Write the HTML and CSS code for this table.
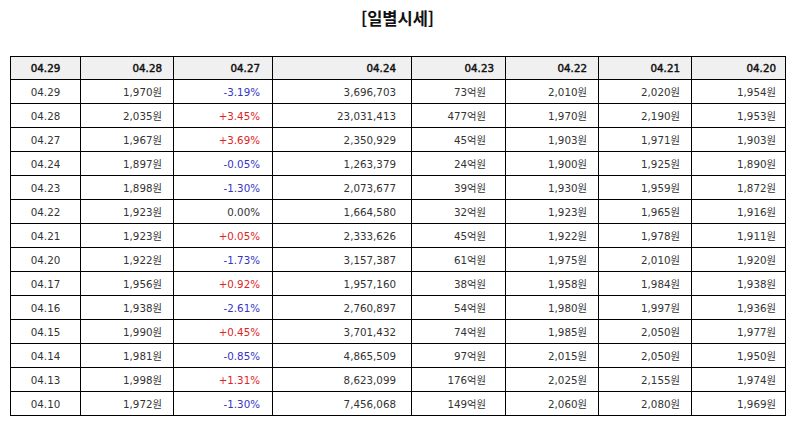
FILE: index.html
```html
<!DOCTYPE html>
<html lang="ko">
<head>
<meta charset="utf-8">
<link rel="stylesheet" href="styles.css">
</head>
<body>
<h2 class="title">[일별시세]</h2>
<table class="quotes">
<colgroup>
<col class="c1"><col class="c2"><col class="c3"><col class="c4"><col class="c5"><col class="c6"><col class="c7"><col class="c8">
</colgroup>
<thead>
<tr><th class="date">04.29</th><th>04.28</th><th>04.27</th><th>04.24</th><th>04.23</th><th>04.22</th><th>04.21</th><th>04.20</th></tr>
</thead>
<tbody>
<tr><td class="date">04.29</td><td>1,970원</td><td class="down">-3.19%</td><td>3,696,703</td><td>73억원</td><td>2,010원</td><td>2,020원</td><td>1,954원</td></tr>
<tr><td class="date">04.28</td><td>2,035원</td><td class="up">+3.45%</td><td>23,031,413</td><td>477억원</td><td>1,970원</td><td>2,190원</td><td>1,953원</td></tr>
<tr><td class="date">04.27</td><td>1,967원</td><td class="up">+3.69%</td><td>2,350,929</td><td>45억원</td><td>1,903원</td><td>1,971원</td><td>1,903원</td></tr>
<tr><td class="date">04.24</td><td>1,897원</td><td class="down">-0.05%</td><td>1,263,379</td><td>24억원</td><td>1,900원</td><td>1,925원</td><td>1,890원</td></tr>
<tr><td class="date">04.23</td><td>1,898원</td><td class="down">-1.30%</td><td>2,073,677</td><td>39억원</td><td>1,930원</td><td>1,959원</td><td>1,872원</td></tr>
<tr><td class="date">04.22</td><td>1,923원</td><td>0.00%</td><td>1,664,580</td><td>32억원</td><td>1,923원</td><td>1,965원</td><td>1,916원</td></tr>
<tr><td class="date">04.21</td><td>1,923원</td><td class="up">+0.05%</td><td>2,333,626</td><td>45억원</td><td>1,922원</td><td>1,978원</td><td>1,911원</td></tr>
<tr><td class="date">04.20</td><td>1,922원</td><td class="down">-1.73%</td><td>3,157,387</td><td>61억원</td><td>1,975원</td><td>2,010원</td><td>1,920원</td></tr>
<tr><td class="date">04.17</td><td>1,956원</td><td class="up">+0.92%</td><td>1,957,160</td><td>38억원</td><td>1,958원</td><td>1,984원</td><td>1,938원</td></tr>
<tr><td class="date">04.16</td><td>1,938원</td><td class="down">-2.61%</td><td>2,760,897</td><td>54억원</td><td>1,980원</td><td>1,997원</td><td>1,936원</td></tr>
<tr><td class="date">04.15</td><td>1,990원</td><td class="up">+0.45%</td><td>3,701,432</td><td>74억원</td><td>1,985원</td><td>2,050원</td><td>1,977원</td></tr>
<tr><td class="date">04.14</td><td>1,981원</td><td class="down">-0.85%</td><td>4,865,509</td><td>97억원</td><td>2,015원</td><td>2,050원</td><td>1,950원</td></tr>
<tr><td class="date">04.13</td><td>1,998원</td><td class="up">+1.31%</td><td>8,623,099</td><td>176억원</td><td>2,025원</td><td>2,155원</td><td>1,974원</td></tr>
<tr><td class="date">04.10</td><td>1,972원</td><td class="down">-1.30%</td><td>7,456,068</td><td>149억원</td><td>2,060원</td><td>2,080원</td><td>1,969원</td></tr>
</tbody>
</table>
</body>
</html>
```
FILE: styles.css
```css
html, body {
  margin: 0;
  padding: 0;
  background: #fff;
}
body {
  padding: 0 9px 0 10px;
  font-family: "DejaVu Sans", "Noto Sans CJK KR", sans-serif;
  color: #333;
}
.title {
  margin: 0;
  padding-top: 7px;
  height: 56px;
  box-sizing: border-box;
  text-align: center;
  font-family: "Noto Sans CJK KR", "Noto Sans", sans-serif;
  font-size: 16.5px;
  line-height: 22px;
  font-weight: bold;
  color: #111;
}
.quotes {
  width: 775px;
  border-collapse: collapse;
  table-layout: fixed;
  font-size: 10.3px;
}
.c1 { width: 70px; }
.c2 { width: 93px; }
.c3 { width: 99px; }
.c4 { width: 139px; }
.c5 { width: 94px; }
.c6 { width: 93px; }
.c7 { width: 93px; }
.c8 { width: 94px; }
.quotes th,
.quotes td {
  border: 1px solid #000;
  padding: 0 11px 0 4px;
  text-align: right;
  line-height: 14px;
  white-space: nowrap;
  box-sizing: border-box;
}
.quotes th {
  background: #f0f0f0;
  font-weight: normal;
  -webkit-text-stroke: 0.45px #111;
  color: #111;
  height: 23px;
}
.quotes td {
  height: 24px;
}
.quotes :is(th, td):nth-child(3) { padding-right: 12px; }
.quotes :is(th, td):nth-child(4) { padding-right: 15px; }
.quotes td:nth-child(5) { padding-right: 19px; }
.quotes :is(th, td):nth-child(8) { padding-right: 9px; }
.quotes .date {
  text-align: center;
  padding: 0;
}
.up { color: #e02424; }
.down { color: #3434c8; }
```
